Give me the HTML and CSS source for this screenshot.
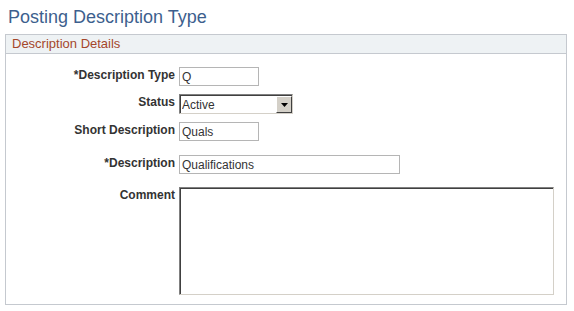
FILE: index.html
```html
<!DOCTYPE html>
<html lang="en">
<head>
    <meta charset="UTF-8">
    <title>Posting Description Type</title>
    <link rel="stylesheet" href="styles.css">
</head>
<body>

    <h1 class="page-title">Posting Description Type</h1>

    <!-- Description details group box -->
    <div class="group-box">
        <div class="group-header">Description Details</div>

        <div class="form">
            <div class="form-row row-type">
                <label class="field-label" for="descr-type">*Description Type</label>
                <input class="text-input input-short" type="text" id="descr-type" value="Q">
            </div>

            <div class="form-row row-status">
                <label class="field-label" for="status">Status</label>
                <div class="select-box">
                    <select id="status">
                        <option>Active</option>
                        <option>Inactive</option>
                    </select>
                    <span class="select-button">
                        <svg width="7" height="4" viewBox="0 0 7 4"><path d="M0 0h7L3.5 4z" fill="#000"/></svg>
                    </span>
                </div>
            </div>

            <div class="form-row row-short">
                <label class="field-label" for="short-descr">Short Description</label>
                <input class="text-input input-short" type="text" id="short-descr" value="Quals">
            </div>

            <div class="form-row row-descr">
                <label class="field-label" for="descr">*Description</label>
                <input class="text-input input-long" type="text" id="descr" value="Qualifications">
            </div>

            <div class="form-row row-comment">
                <label class="field-label" for="comment">Comment</label>
                <textarea id="comment" class="comment-box"></textarea>
            </div>
        </div>
    </div>

</body>
</html>
```

FILE: styles.css
```css
/* Page basics */
body {
    font-family: 'Liberation Sans', Arial, sans-serif;
    margin: 0;
    padding: 0;
    background-color: #fff;
    color: #333;
}

/* Page title */
.page-title {
    font-size: 18px;
    font-weight: normal;
    color: #3d5f8e;
    margin: 0;
    padding: 6px 0 0 8px;
    height: 28px;
    line-height: 22px;
}

/* Group box */
.group-box {
    margin-left: 5px;
    width: 560px;
    border: 1px solid #c5c9cf;
    padding-bottom: 9px;
}

.group-header {
    background-color: #eef2f4;
    border-bottom: 1px solid #c5c9cf;
    color: #a5472b;
    font-size: 13px;
    height: 18px;
    line-height: 18px;
    padding-left: 6px;
}

/* Form rows */
.form {
    padding-top: 13px;
}

.form-row {
    display: flex;
    align-items: flex-start;
}

.field-label {
    width: 169px;
    padding-right: 4px;
    text-align: right;
    font-size: 12px;
    font-weight: bold;
    color: #333;
    line-height: 14px;
    padding-top: 1px;
}

.row-status { margin-top: 8px; }
.row-short { margin-top: 8px; }
.row-descr { margin-top: 14px; }
.row-comment { margin-top: 13px; }

/* Text inputs */
.text-input {
    font-family: 'Liberation Sans', Arial, sans-serif;
    font-size: 12px;
    color: #333;
    height: 19px;
    box-sizing: border-box;
    border: 1px solid #b5b5b5;
    padding: 1px 2px 0;
    margin: 0;
    outline: none;
}

.input-short { width: 80px; }
.input-long { width: 221px; }

/* Status dropdown */
.select-box {
    display: flex;
    width: 114px;
    height: 20px;
    box-sizing: border-box;
    border-top: 1px solid #808080;
    border-left: 1px solid #808080;
    border-right: 1px solid #d4d0c8;
    border-bottom: 1px solid #d4d0c8;
    box-shadow: inset 1px 1px 0 #404040;
    background: #fff;
    padding: 1px 0 0 1px;
}

.select-box select {
    flex: 1;
    appearance: none;
    -webkit-appearance: none;
    border: none;
    background: transparent;
    font-family: 'Liberation Sans', Arial, sans-serif;
    font-size: 12px;
    color: #333;
    padding: 0 0 0 1px;
    margin: 0;
    outline: none;
}

.select-button {
    width: 16px;
    box-sizing: border-box;
    background: #d4d0c8;
    border-top: 1px solid #fff;
    border-left: 1px solid #fff;
    border-right: 1px solid #404040;
    border-bottom: 1px solid #404040;
    display: flex;
    align-items: center;
    justify-content: center;
}

/* Comment area */
.comment-box {
    width: 375px;
    height: 108px;
    box-sizing: border-box;
    border-top: 1px solid #808080;
    border-left: 1px solid #808080;
    border-right: 1px solid #d4d0c8;
    border-bottom: 1px solid #d4d0c8;
    box-shadow: inset 1px 1px 0 #404040;
    margin: 0;
    padding: 3px;
    resize: none;
    outline: none;
    font-family: 'Liberation Sans', Arial, sans-serif;
    font-size: 12px;
}
```
